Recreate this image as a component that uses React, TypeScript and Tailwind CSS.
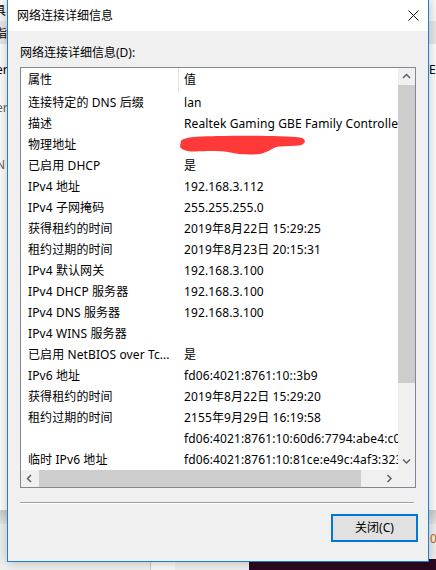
import React from "react";

const font = "font-['Noto_Sans','Noto_Sans_CJK_SC',sans-serif]";

const rows: [string, string][] = [
  ["连接特定的 DNS 后缀", "lan"],
  ["描述", "Realtek Gaming GBE Family Controller"],
  ["物理地址", ""],
  ["已启用 DHCP", "是"],
  ["IPv4 地址", "192.168.3.112"],
  ["IPv4 子网掩码", "255.255.255.0"],
  ["获得租约的时间", "2019年8月22日 15:29:25"],
  ["租约过期的时间", "2019年8月23日 20:15:31"],
  ["IPv4 默认网关", "192.168.3.100"],
  ["IPv4 DHCP 服务器", "192.168.3.100"],
  ["IPv4 DNS 服务器", "192.168.3.100"],
  ["IPv4 WINS 服务器", ""],
  ["已启用 NetBIOS over Tc...", "是"],
  ["IPv6 地址", "fd06:4021:8761:10::3b9"],
  ["获得租约的时间", "2019年8月22日 15:29:20"],
  ["租约过期的时间", "2155年9月29日 16:19:58"],
  ["", "fd06:4021:8761:10:60d6:7794:abe4:c0a1"],
  ["临时 IPv6 地址", "fd06:4021:8761:10:81ce:e49c:4af3:3232"],
];

function Chevron({ dir }: { dir: "up" | "down" | "left" | "right" }) {
  const d = {
    up: "M1 5 L4.5 1.5 L8 5",
    down: "M1 1.5 L4.5 5 L8 1.5",
    left: "M5 1 L1.5 4.5 L5 8",
    right: "M1.5 1 L5 4.5 L1.5 8",
  }[dir];
  const vertical = dir === "up" || dir === "down";
  return (
    <svg
      width={vertical ? 9 : 7}
      height={vertical ? 7 : 9}
      viewBox={vertical ? "0 0 9 7" : "0 0 7 9"}
      fill="none"
      stroke="#606060"
      strokeWidth="1.5"
    >
      <path d={d} />
    </svg>
  );
}

// red brush stroke hiding the MAC address
function Scribble() {
  return (
    <svg width="128" height="21" viewBox="0 0 128 21" className="-ml-[4px] block">
      <path
        d="M1 7 C4 2.5 20 2.5 40 2 S100 1.5 120 3.5 C126 4.5 127 9.5 120 11.5 L100 12.5 C92 13 91 17.5 80 20 C70 21 58 20.5 48 18 C38 16.5 25 17 15 17.5 C6 17.5 0 15.5 0 12 Z"
        fill="#ff3838"
      />
    </svg>
  );
}

function ListView() {
  return (
    <div className="ml-[12px] mt-[6px] w-[396px] h-[421px] border border-[#828790] bg-white flex flex-col">
      <div className="flex h-[402px]">
        <div className="w-[377px] overflow-hidden">
          <div className="flex h-[24px] items-center">
            <div className="w-[157px] pl-[7px]">属性</div>
            <div className="w-px h-full bg-[#e5e5e5]" />
            <div className="pl-[5px]">值</div>
          </div>
          {rows.map(([k, v], i) => (
            <div key={i} className="flex h-[21px] items-center whitespace-nowrap">
              <div className="w-[158px] shrink-0 pl-[7px] overflow-hidden tracking-[0.1px]">{k}</div>
              <div className="pl-[5px] tracking-[0.12px]">{i === 2 ? <Scribble /> : v}</div>
            </div>
          ))}
        </div>
        <div className="w-[17px] bg-[#f0f0f0] flex flex-col">
          <div className="h-[17px] flex items-center justify-center">
            <Chevron dir="up" />
          </div>
          <div className="flex-1">
            <div className="h-[298px] bg-[#cdcdcd]" />
          </div>
          <div className="h-[17px] flex items-center justify-center">
            <Chevron dir="down" />
          </div>
        </div>
      </div>
      <div className="flex h-[17px] bg-[#f0f0f0]">
        <div className="w-[17px] flex items-center justify-center">
          <Chevron dir="left" />
        </div>
        <div className="ml-[1px] w-[322px] bg-[#cdcdcd]" />
        <div className="flex-1" />
        <div className="w-[17px] flex items-center justify-center">
          <Chevron dir="right" />
        </div>
        <div className="w-[17px]" />
      </div>
    </div>
  );
}

function Dialog() {
  return (
    <div className="absolute left-[7px] top-[-1px] w-[422px] h-[563px] border border-[#1c7fd6] bg-[#f0f0f0] flex flex-col shadow-[0_0_12px_rgba(0,0,0,0.25)]">
      <div className="h-[31px] bg-white flex items-center justify-between">
        <span className="pl-[9px]">网络连接详细信息</span>
        <svg width="11" height="11" viewBox="0 0 11 11" className="mr-[9px]" stroke="#111" strokeWidth="1">
          <path d="M0.5 0.5 L10.5 10.5 M10.5 0.5 L0.5 10.5" />
        </svg>
      </div>
      <div className="ml-[12px] mt-[14px] leading-[16px]">网络连接详细信息(D):</div>
      <ListView />
      <div className="ml-[12px] mt-[14px] w-[394px] border-t border-[#a0a0a0] border-b border-b-white" />
      <div className="flex justify-end mr-[10px] mt-[10px]">
        <button className="w-[87px] h-[28px] border-2 border-[#0078d7] bg-[#e1e1e1] flex items-center justify-center">
          关闭(C)
        </button>
      </div>
    </div>
  );
}

export default function App() {
  return (
    <div className={`relative w-[436px] h-[570px] overflow-hidden bg-white text-[12px] text-black ${font}`}>
      {/* windows behind the dialog */}
      <div className="absolute inset-x-0 top-0 h-[21px] bg-[#fafafa]">
        <span className="absolute left-[-18px] top-[2px]">工具</span>
      </div>
      <div className="absolute inset-x-0 top-[21px] h-[23px] bg-[#e9e9e9]">
        <span className="absolute left-[-5px] top-[4px]">诣</span>
      </div>
      <span className="absolute left-[-10px] top-[61px]">ver</span>
      <span className="absolute left-[-10px] top-[99px] text-[#666]">ver</span>
      <span className="absolute left-[-4px] top-[156px] text-[#666]">N</span>
      <span className="absolute left-[429px] top-[61px]">Eth</span>
      <div className="absolute left-0 top-[510px] w-[436px] h-[14px] bg-gradient-to-b from-[#cfcfcf] to-[#e6e6e6]" />
      <div className="absolute left-0 top-[524px] w-[436px] h-[46px] bg-[#f0f0f0]" />
      <div className="absolute left-[150px] top-[524px] w-px h-[46px] bg-[#c8c8c8]" />
      <div className="absolute left-[151px] top-[524px] w-[24px] h-[46px] bg-[#fafafa]" />
      <span className="absolute left-[430px] top-[530px] text-[#c86400]">0</span>
      <div className="absolute left-[249px] top-[559px] w-[187px] h-[11px] bg-[#2a0a1f]" />
      <div className="absolute left-[429px] top-[559px] w-[7px] h-[11px] bg-[#2a0a1f]" />
      <Dialog />
    </div>
  );
}
